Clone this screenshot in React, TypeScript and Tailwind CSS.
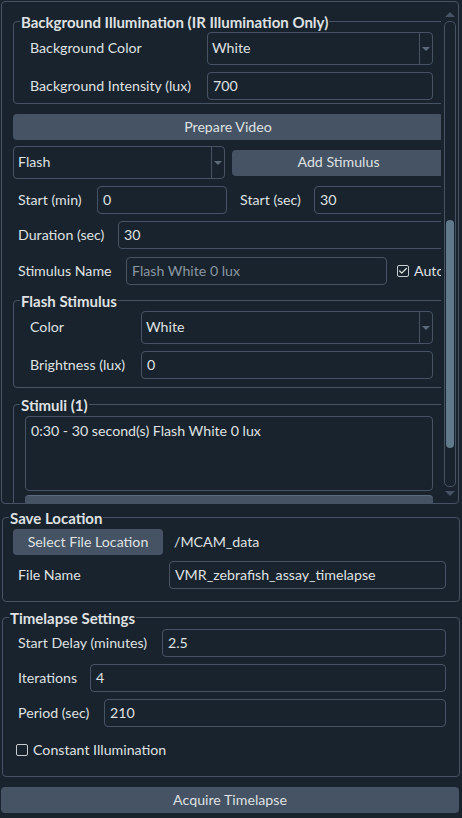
import { Check } from 'lucide-react'

const font = { fontFamily: 'Lato, "Noto Sans", sans-serif' }

function Combo({ value, className }: { value: string; className: string }) {
  return (
    <div className={`flex border border-[#455364] rounded-[4px] h-[33px] ${className}`}>
      <div className="flex-1 flex items-center pl-[4px]">{value}</div>
      <div className="w-[13px] border-l border-[#455364] flex items-center justify-center">
        <div className="w-0 h-0 border-l-[4px] border-r-[4px] border-t-[4px] border-l-transparent border-r-transparent border-t-[#5b6b7c]" />
      </div>
    </div>
  )
}

function Field({ value, className, placeholder }: { value?: string; className: string; placeholder?: string }) {
  return (
    <div className={`flex items-center border border-[#455364] rounded-[4px] h-[28px] pl-[5px] ${className}`}>
      {value ?? <span className="text-[#8a96a2]">{placeholder}</span>}
    </div>
  )
}

function Button({ label, className }: { label: string; className: string }) {
  return (
    <div className={`flex items-center justify-center bg-[#455364] rounded-[4px] h-[26px] ${className}`}>
      {label}
    </div>
  )
}

function Group({ title, className, children }: { title: string; className: string; children: React.ReactNode }) {
  return (
    <div className={`relative border border-[#455364] rounded-[4px] ${className}`}>
      <span className="absolute -top-[9px] left-[6px] px-[1px] bg-[#19232d] font-bold text-[15px] leading-[18px]">{title}</span>
      {children}
    </div>
  )
}

function CheckBox({ checked }: { checked?: boolean }) {
  return (
    <div className="w-[12px] h-[12px] border border-[#c9cdd1] rounded-[2px] flex items-center justify-center">
      {checked && <Check className="w-[10px] h-[10px] text-[#dfe1e2]" strokeWidth={3} />}
    </div>
  )
}

export default function App() {
  return (
    <div className="w-[462px] h-[818px] bg-[#19232d] text-[#dfe1e2] text-[14.2px] leading-none overflow-hidden" style={font}>
      {/* scroll area */}
      <div className="ml-[1px] mt-[1px] w-[458px] h-[503px] border border-[#455364] rounded-[4px] flex">
        <div className="w-[439px] h-[501px] overflow-hidden">
          <div className="w-[470px]">
            <Group title="Background Illumination (IR Illumination Only)" className="ml-[11px] mt-[19px] w-[440px] pt-[10px] pb-[3px]">
              <div className="flex items-center">
                <span className="w-[193px] pl-[16px]">Background Color</span>
                <Combo value="White" className="w-[226px]" />
              </div>
              <div className="flex items-center mt-[7px]">
                <span className="w-[193px] pl-[16px]">Background Intensity (lux)</span>
                <Field value="700" className="w-[226px]" />
              </div>
            </Group>

            <Button label="Prepare Video" className="ml-[11px] mt-[10px] w-[430px]" />

            <div className="flex items-center ml-[11px] mt-[6px]">
              <Combo value="Flash" className="w-[212px]" />
              <Button label="Add Stimulus" className="ml-[7px] w-[213px]" />
            </div>

            <div className="flex items-center ml-[16px] mt-[7px]">
              <span className="w-[79px]">Start (min)</span>
              <Field value="0" className="w-[130px]" />
              <span className="w-[74px] ml-[13px]">Start (sec)</span>
              <Field value="30" className="w-[130px]" />
            </div>

            <div className="flex items-center ml-[16px] mt-[7px]">
              <span className="w-[100px]">Duration (sec)</span>
              <Field value="30" className="w-[327px]" />
            </div>

            <div className="flex items-center ml-[16px] mt-[8px]">
              <span className="w-[108px]">Stimulus Name</span>
              <Field placeholder="Flash White 0 lux" className="w-[261px]" />
              <div className="ml-[10px]"><CheckBox checked /></div>
              <span className="ml-[5px]">Auto</span>
            </div>

            <Group title="Flash Stimulus" className="ml-[11px] mt-[15px] w-[440px] pt-[10px] pb-[8px]">
              <div className="flex items-center">
                <span className="w-[127px] pl-[16px]">Color</span>
                <Combo value="White" className="w-[292px]" />
              </div>
              <div className="flex items-center mt-[7px]">
                <span className="w-[127px] pl-[16px]">Brightness (lux)</span>
                <Field value="0" className="w-[292px]" />
              </div>
            </Group>

            <Group title="Stimuli (1)" className="ml-[11px] mt-[16px] w-[440px] pt-[11px] h-[120px]">
              <div className="ml-[11px] w-[408px] h-[75px] border border-[#455364] rounded-[4px] pl-[5px] pt-[5px] leading-[18px]">
                0:30 - 30 second(s) Flash White 0 lux
              </div>
              <div className="ml-[11px] mt-[4px] w-[408px] h-[26px] bg-[#455364] rounded-[4px] border-t border-[#5b6b7c]" />
            </Group>
          </div>
        </div>
        {/* vertical scrollbar */}
        <div className="w-[17px] flex flex-col items-center">
          <div className="mt-[10px] w-0 h-0 border-l-[5px] border-r-[5px] border-b-[5px] border-l-transparent border-r-transparent border-b-[#455364]" />
          <div className="mt-[4px] w-[12px] h-[466px] border border-[#455364] rounded-[5px] pt-[198px] flex justify-center">
            <div className="w-[8px] h-[228px] bg-[#60798b] rounded-[4px]" />
          </div>
          <div className="mt-[4px] w-0 h-0 border-l-[5px] border-r-[5px] border-t-[5px] border-l-transparent border-r-transparent border-t-[#455364]" />
        </div>
      </div>

      <Group title="Save Location" className="ml-[2px] mt-[13px] w-[458px] pt-[11px] pb-[12px]">
        <div className="flex items-center ml-[10px]">
          <Button label="Select File Location" className="w-[150px]" />
          <span className="ml-[11px]">/MCAM_data</span>
        </div>
        <div className="flex items-center ml-[15px] mt-[6px]">
          <span className="w-[151px]">File Name</span>
          <Field value="VMR_zebrafish_assay_timelapse" className="w-[277px]" />
        </div>
      </Group>

      <Group title="Timelapse Settings" className="ml-[2px] mt-[15px] w-[458px] pt-[11px] h-[160px]">
        <div className="flex items-center ml-[15px]">
          <span className="w-[144px]">Start Delay (minutes)</span>
          <Field value="2.5" className="w-[284px]" />
        </div>
        <div className="flex items-center ml-[15px] mt-[7px]">
          <span className="w-[72px]">Iterations</span>
          <Field value="4" className="w-[356px]" />
        </div>
        <div className="flex items-center ml-[15px] mt-[7px]">
          <span className="w-[86px]">Period (sec)</span>
          <Field value="210" className="w-[342px]" />
        </div>
        <div className="flex items-center ml-[13px] mt-[16px]">
          <CheckBox />
          <span className="ml-[5px]">Constant Illumination</span>
        </div>
      </Group>

      <Button label="Acquire Timelapse" className="ml-[1px] mt-[10px] w-[458px]" />
    </div>
  )
}
